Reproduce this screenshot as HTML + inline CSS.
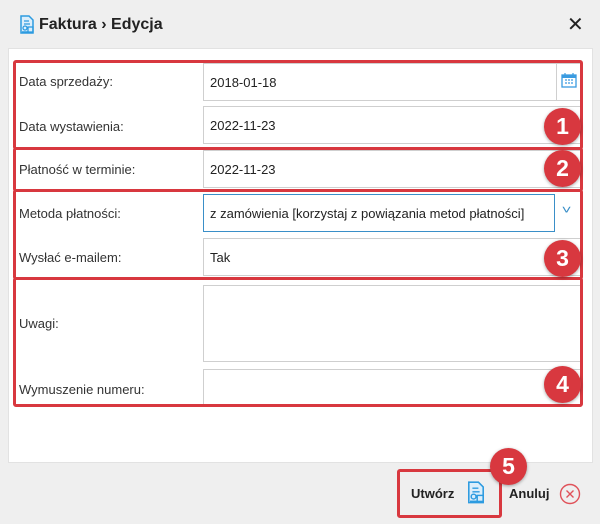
<!DOCTYPE html>
<html><head><meta charset="utf-8"><style>
*{margin:0;padding:0;box-sizing:border-box}
body{width:600px;height:524px;background:#efefef;font-family:"Liberation Sans","DejaVu Sans",sans-serif;position:relative;overflow:hidden;color:#333}
.a{position:absolute}
.panel{left:8px;top:48px;width:585px;height:415px;background:#fff;border:1px solid #e2e2e2}
.lbl{font-size:13px;color:#333;left:19px}
.inp{background:#fff;border:1px solid #cfcfcf;font-size:13px;color:#222;padding-left:6px;display:flex;align-items:center}
.red{border:3.5px solid #d8383f;border-radius:3px}
.num{width:37px;height:37px;border-radius:50%;background:#d8383f;color:#fff;font-weight:bold;font-size:23px;display:flex;align-items:center;justify-content:center;box-shadow:0 1px 3px rgba(0,0,0,.35)}
</style></head><body>
<svg class="a" style="left:18px;top:15px" width="18" height="20" viewBox="0 0 18 20"><path d="M3 1h8l4 4v13H3z" fill="#dbeefb" stroke="#2d9be0" stroke-width="1.5"/><path d="M6 6h5M6 9h6" stroke="#2d9be0" stroke-width="1.3"/><circle cx="7" cy="13" r="2" fill="none" stroke="#2d9be0" stroke-width="1.3"/><path d="M4 17h6" stroke="#2d9be0" stroke-width="1.5"/><rect x="10" y="12" width="5" height="5" fill="none" stroke="#2d9be0" stroke-width="1.3"/></svg>
<div class="a" style="left:39px;top:16px;font-size:16px;font-weight:bold;color:#222">Faktura › Edycja</div>
<div class="a" style="left:567px;top:12px;font-size:20px;color:#222">✕</div>
<div class="a panel"></div>

<div class="a lbl" style="top:74px">Data sprzedaży:</div>
<div class="a inp" style="left:203px;top:63px;width:378px;height:38px">2018-01-18</div>
<div class="a" style="left:556px;top:63px;width:1px;height:38px;background:#cfcfcf"></div>
<svg class="a" style="left:561px;top:72px" width="16" height="16" viewBox="0 0 16 16"><rect x="1" y="3" width="14" height="12" fill="none" stroke="#3a9be0" stroke-width="1.3"/><rect x="1" y="3" width="14" height="3" fill="#3a9be0"/><path d="M4 1v3M12 1v3M4 8h2M7 8h2M10 8h2M4 11h2M7 11h2M10 11h2" stroke="#3a9be0" stroke-width="1.2"/></svg>

<div class="a lbl" style="top:119px">Data wystawienia:</div>
<div class="a inp" style="left:203px;top:106px;width:378px;height:38px">2022-11-23</div>
<div class="a lbl" style="top:162px">Płatność w terminie:</div>
<div class="a inp" style="left:203px;top:150px;width:378px;height:38px">2022-11-23</div>
<div class="a lbl" style="top:206px">Metoda płatności:</div>
<div class="a inp" style="left:203px;top:194px;width:352px;height:38px;border-color:#3a8fc8">z zamówienia [korzystaj z powiązania metod płatności]</div>
<div class="a" style="left:563px;top:203px;font-size:12px;color:#3a8fc8;transform:scaleX(1.4)">˅</div>
<div class="a lbl" style="top:250px">Wysłać e-mailem:</div>
<div class="a inp" style="left:203px;top:238px;width:378px;height:38px">Tak</div>
<div class="a lbl" style="top:316px">Uwagi:</div>
<div class="a inp" style="left:203px;top:285px;width:378px;height:77px"></div>
<div class="a lbl" style="top:382px">Wymuszenie numeru:</div>
<div class="a inp" style="left:203px;top:369px;width:378px;height:38px"></div>

<div class="a red" style="left:13px;top:60px;width:570px;height:90px"></div>
<div class="a red" style="left:13px;top:147px;width:570px;height:45px"></div>
<div class="a red" style="left:13px;top:189px;width:570px;height:91px"></div>
<div class="a red" style="left:13px;top:277px;width:570px;height:130px"></div>

<div class="a num" style="left:544px;top:108px">1</div>
<div class="a num" style="left:544px;top:150px">2</div>
<div class="a num" style="left:544px;top:240px">3</div>
<div class="a num" style="left:544px;top:366px">4</div>

<div class="a red" style="left:397px;top:469px;width:105px;height:49px"></div>
<div class="a" style="left:411px;top:486px;font-size:13px;font-weight:bold;color:#222">Utwórz</div>
<svg class="a" style="left:465px;top:481px" width="22" height="24" viewBox="0 0 18 20"><path d="M3 1h8l4 4v13H3z" fill="#dbeefb" stroke="#2d9be0" stroke-width="1.3"/><path d="M6 6h5M6 9h6" stroke="#2d9be0" stroke-width="1.2"/><circle cx="7" cy="13" r="2" fill="none" stroke="#2d9be0" stroke-width="1.2"/><path d="M4 17h6" stroke="#2d9be0" stroke-width="1.4"/><rect x="10" y="12" width="5" height="5" fill="none" stroke="#2d9be0" stroke-width="1.2"/></svg>
<div class="a num" style="left:490px;top:448px">5</div>
<div class="a" style="left:509px;top:486px;font-size:13px;font-weight:bold;color:#222">Anuluj</div>
<svg class="a" style="left:559px;top:483px" width="22" height="22" viewBox="0 0 22 22"><circle cx="11" cy="11" r="9.5" fill="none" stroke="#e0525a" stroke-width="1.4"/><path d="M7.5 7.5l7 7M14.5 7.5l-7 7" stroke="#e0525a" stroke-width="1.4"/></svg>
</body></html>
